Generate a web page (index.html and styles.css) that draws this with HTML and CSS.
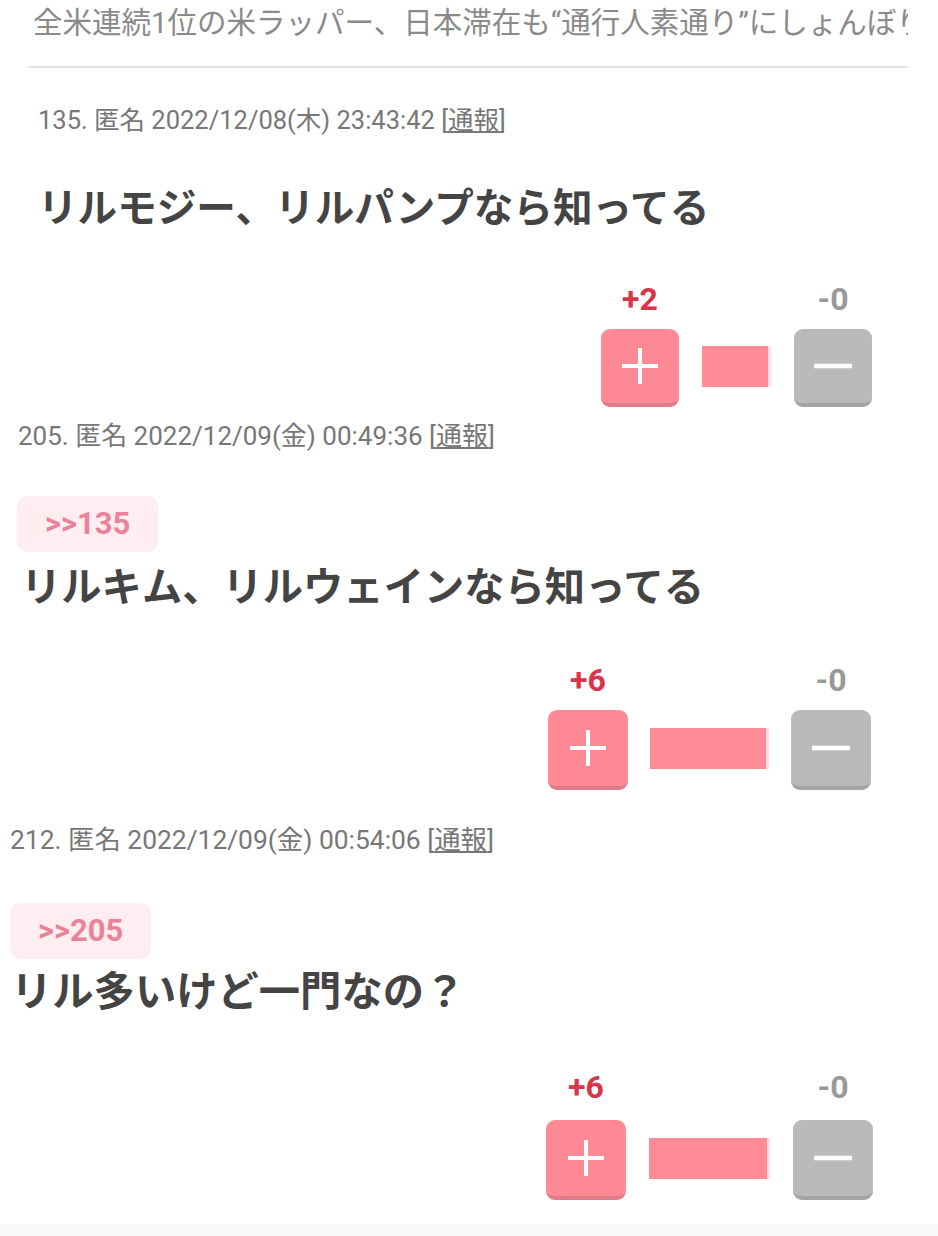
FILE: index.html
```html
<!DOCTYPE html>
<html lang="ja">
<head>
    <meta charset="UTF-8">
    <meta name="viewport" content="width=device-width, initial-scale=1.0">
    <title>全米連続1位の米ラッパー</title>
    <link rel="stylesheet" href="styles.css">
</head>
<body>
    <div class="topic">
        <div class="topic-title">全米連続1位の米ラッパー、日本滞在も“通行人素通り”にしょんぼり</div>
    </div>

    <div class="res res-a">
        <div class="res-meta">135. 匿名 2022/12/08(木) 23:43:42 [<a href="#">通報</a>]</div>
        <div class="res-body">リルモジー、リルパンプなら知ってる</div>
        <div class="votes">
            <div class="vote-count plus-count">+2</div>
            <div></div>
            <div class="vote-count minus-count">-0</div>
            <button class="vote-btn plus">
                <svg width="40" height="40" viewBox="0 0 40 40"><path d="M20 2V38M2 20H38" stroke="#fff" stroke-width="4"/></svg>
            </button>
            <div class="vote-bar" style="width: 69px"></div>
            <button class="vote-btn minus">
                <svg width="40" height="40" viewBox="0 0 40 40"><path d="M1 20H39" stroke="#fff" stroke-width="4.5"/></svg>
            </button>
        </div>
    </div>

    <div class="res res-b">
        <div class="res-meta">205. 匿名 2022/12/09(金) 00:49:36 [<a href="#">通報</a>]</div>
        <div class="anchor">&gt;&gt;135</div>
        <div class="res-body">リルキム、リルウェインなら知ってる</div>
        <div class="votes">
            <div class="vote-count plus-count">+6</div>
            <div></div>
            <div class="vote-count minus-count">-0</div>
            <button class="vote-btn plus">
                <svg width="40" height="40" viewBox="0 0 40 40"><path d="M20 2V38M2 20H38" stroke="#fff" stroke-width="4"/></svg>
            </button>
            <div class="vote-bar" style="width: 119px"></div>
            <button class="vote-btn minus">
                <svg width="40" height="40" viewBox="0 0 40 40"><path d="M1 20H39" stroke="#fff" stroke-width="4.5"/></svg>
            </button>
        </div>
    </div>

    <div class="res res-c">
        <div class="res-meta">212. 匿名 2022/12/09(金) 00:54:06 [<a href="#">通報</a>]</div>
        <div class="anchor">&gt;&gt;205</div>
        <div class="res-body">リル多いけど一門なの？</div>
        <div class="votes">
            <div class="vote-count plus-count">+6</div>
            <div></div>
            <div class="vote-count minus-count">-0</div>
            <button class="vote-btn plus">
                <svg width="40" height="40" viewBox="0 0 40 40"><path d="M20 2V38M2 20H38" stroke="#fff" stroke-width="4"/></svg>
            </button>
            <div class="vote-bar" style="width: 121px"></div>
            <button class="vote-btn minus">
                <svg width="40" height="40" viewBox="0 0 40 40"><path d="M1 20H39" stroke="#fff" stroke-width="4.5"/></svg>
            </button>
        </div>
    </div>

    <div class="page-foot"></div>
</body>
</html>
```

FILE: styles.css
```css
body {
    margin: 0;
    background-color: #fff;
    font-family: Roboto, "Noto Sans CJK JP", sans-serif;
    color: #444;
}
.topic {
    margin: 0 30px 0 28px;
    padding-bottom: 20px;
    border-bottom: 2px solid #e3e3e3;
}
.topic-title {
    font-size: 29.5px;
    line-height: 46px;
    padding-left: 5px;
    color: #8a8a8a;
    white-space: nowrap;
    overflow: hidden;
}
.res-meta {
    font-size: 25.5px;
    line-height: 32px;
    color: #777;
}
.res-meta a {
    color: #777;
}
.res-body {
    font-size: 40.5px;
    line-height: 52px;
    font-weight: bold;
    color: #444;
}
.anchor {
    display: inline-block;
    padding: 0 28px;
    height: 56px;
    line-height: 56px;
    border-radius: 10px;
    background-color: #ffeef1;
    color: #ea8299;
    font-size: 31px;
    font-weight: bold;
}
.votes {
    display: grid;
    grid-template-columns: 78px auto 78px;
    column-gap: 23px;
    row-gap: 12px;
    justify-content: end;
    padding-right: 66px;
}
.vote-count {
    text-align: center;
    font-size: 32px;
    line-height: 36px;
    font-weight: bold;
}
.plus-count {
    color: #d8344a;
}
.minus-count {
    color: #999;
}
.vote-btn {
    display: flex;
    align-items: center;
    justify-content: center;
    width: 78px;
    height: 78px;
    padding: 0;
    border: none;
    border-radius: 9px;
    cursor: pointer;
}
.vote-btn.plus {
    background-color: #ff8a96;
    border-bottom: 4px solid #e07c88;
}
.vote-btn.minus {
    background-color: #bababa;
    border-bottom: 4px solid #a4a4a4;
}
.vote-bar {
    align-self: center;
    height: 41px;
    margin-bottom: 4px;
    background-color: #ff8b97;
    border-right: 3px solid #ffdfe3;
    box-sizing: border-box;
}

/* each reply block sits at its own indent */
.res-a {
    padding-left: 38px;
    margin-top: 36px;
}
.res-a .res-body {
    font-size: 39.6px;
    margin-top: 47px;
}
.res-a .votes {
    margin-top: 46px;
}
.res-b {
    padding-left: 18px;
    margin-top: 13px;
}
.res-b .res-meta {
    font-size: 26px;
}
.res-b .anchor {
    margin: 44px 0 0 -1px;
}
.res-b .res-body {
    font-size: 40.3px;
    margin: 10px 0 0 3px;
}
.res-b .votes {
    margin-top: 48px;
    padding-right: 67px;
    column-gap: 22px;
    grid-template-columns: 80px auto 80px;
}
.res-b .vote-btn,
.res-c .vote-btn {
    width: 80px;
    height: 80px;
}
.res-c {
    padding-left: 10px;
    margin-top: 34px;
}
.res-c .res-meta {
    font-size: 26.4px;
}
.res-c .anchor {
    margin-top: 47px;
}
.res-c .res-body {
    font-size: 41.3px;
    margin: 7px 0 0 1px;
}
.res-c .votes {
    margin-top: 51px;
    row-gap: 15px;
    padding-right: 65px;
    column-gap: 23px;
    grid-template-columns: 80px auto 80px;
}
.page-foot {
    margin-top: 24px;
    height: 40px;
    background-color: #fafafa;
}
```
